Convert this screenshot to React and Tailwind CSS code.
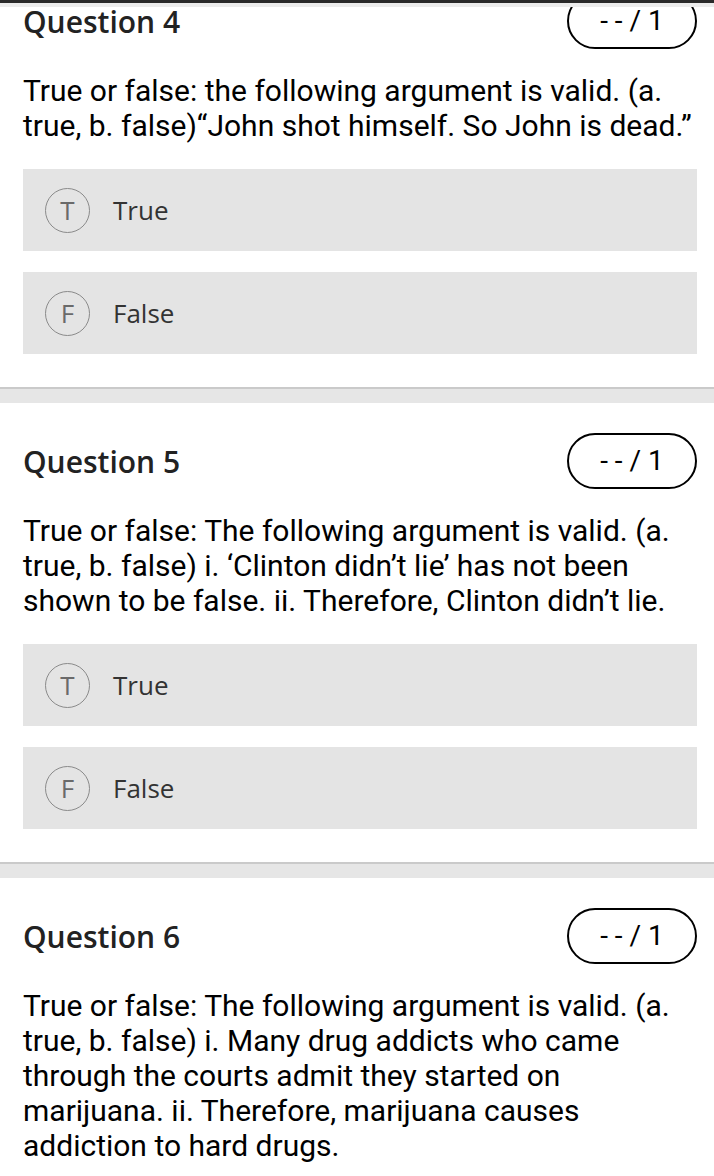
import React from "react";

const questions = [
  {
    n: 4,
    text: "True or false: the following argument is valid. (a. true, b. false)\u201cJohn shot himself. So John is dead.\u201d",
    options: true,
  },
  {
    n: 5,
    text: "True or false: The following argument is valid. (a. true, b. false) i. \u2018Clinton didn\u2019t lie\u2019 has not been shown to be false. ii. Therefore, Clinton didn\u2019t lie.",
    options: true,
  },
  {
    n: 6,
    text: "True or false: The following argument is valid. (a. true, b. false) i. Many drug addicts who came through the courts admit they started on marijuana. ii. Therefore, marijuana causes addiction to hard drugs.",
    options: false,
  },
];

const Option = ({ letter, label }) => (
  <div className="flex items-center h-[82px] bg-[#e4e4e4] pl-[22px]">
    <div className="w-[45px] h-[45px] rounded-full border border-[#8a8a8a] flex items-center justify-center text-[26px] text-[#6a6a6a] font-['Open_Sans',sans-serif]">
      {letter}
    </div>
    <span className="ml-[23px] text-[26px] text-[#333] font-['Open_Sans',sans-serif]">{label}</span>
  </div>
);

const Question = ({ q }) => (
  <section className="pl-[23px] pr-[17px] pt-[30px] pb-[33px] bg-white">
    <div className="flex items-center justify-between h-[56px]">
      <h2 className="text-[30px] font-semibold text-[#222] font-['Open_Sans',sans-serif]">Question {q.n}</h2>
      <div className="w-[130px] h-[56px] rounded-full border-2 border-black flex items-center justify-center text-[28px] text-black font-['Roboto',sans-serif] whitespace-pre">
        {"- - / 1"}
      </div>
    </div>
    <p className="mt-[24px] text-[30px] leading-[35px] text-black font-['Roboto',sans-serif]">{q.text}</p>
    {q.options && (
      <div className="mt-[26px] flex flex-col gap-[21px]">
        <Option letter="T" label="True" />
        <Option letter="F" label="False" />
      </div>
    )}
  </section>
);

export default function App() {
  return (
    <div className="relative w-[714px] h-[1176px] overflow-hidden bg-white">
      <div className="absolute top-0 left-0 right-0 z-10">
        <div className="h-[3px] bg-[#2a2a2a]" />
        <div className="h-[4px] bg-[#ececec]" />
      </div>
      <div className="mt-[-37px]">
        {questions.map((q, i) => (
          <div key={q.n}>
            {i > 0 && (
              <div>
                <div className="h-[2px] bg-[#cacaca]" />
                <div className="h-[14px] bg-[#e6e6e6]" />
              </div>
            )}
            <Question q={q} />
          </div>
        ))}
      </div>
    </div>
  );
}
